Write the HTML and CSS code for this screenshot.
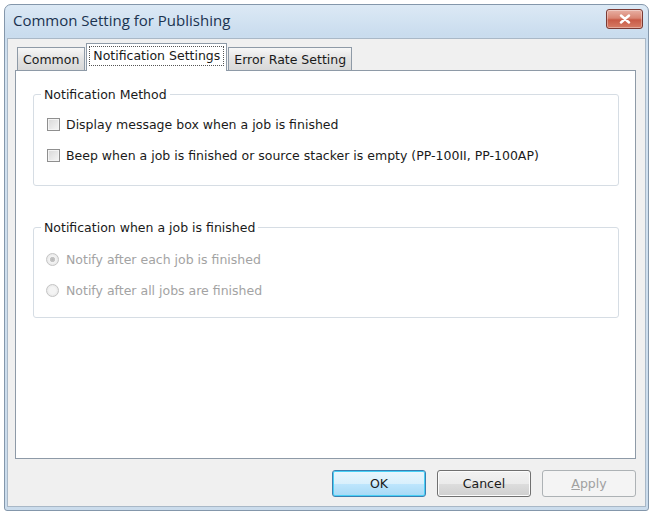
FILE: index.html
```html
<!DOCTYPE html>
<html lang="en">
<head>
    <meta charset="UTF-8">
    <title>Common Setting for Publishing</title>
    <link rel="stylesheet" href="styles.css">
</head>
<body>
    <div class="window">
        <div class="titlebar">
            <span class="title">Common Setting for Publishing</span>
            <button class="close-btn" aria-label="Close">
                <svg width="12" height="10" viewBox="0 0 12 10">
                    <path d="M2 1.5 L10 8.5 M10 1.5 L2 8.5" stroke="#fff" stroke-width="2.4" stroke-linecap="round"/>
                </svg>
            </button>
        </div>
        <div class="client">
            <div class="tabs">
                <div class="tab">Common</div>
                <div class="tab active"><span class="focus">Notification Settings</span></div>
                <div class="tab">Error Rate Setting</div>
            </div>
            <div class="panel">
                <fieldset class="group first">
                    <legend>Notification Method</legend>
                    <div class="rows">
                        <label class="row"><span class="checkbox"></span>Display message box when a job is finished</label>
                        <label class="row"><span class="checkbox"></span>Beep when a job is finished or source stacker is empty (PP-100II, PP-100AP)</label>
                    </div>
                </fieldset>
                <fieldset class="group second">
                    <legend>Notification when a job is finished</legend>
                    <div class="rows">
                        <label class="row disabled"><span class="radio checked"></span>Notify after each job is finished</label>
                        <label class="row disabled"><span class="radio"></span>Notify after all jobs are finished</label>
                    </div>
                </fieldset>
            </div>
            <div class="buttons">
                <button class="btn default">OK</button>
                <button class="btn">Cancel</button>
                <button class="btn disabled"><u>A</u>pply</button>
            </div>
        </div>
    </div>
</body>
</html>
```

FILE: styles.css
```css
body {
    margin: 0;
    background: #ffffff;
    font-family: "DejaVu Sans", Verdana, sans-serif;
    font-size: 12.5px;
    color: #1a1a1a;
}

.window {
    margin: 4px 0 0 4px;
    width: 645px;
    height: 507px;
    box-sizing: border-box;
    border: 1px solid #8497ab;
    border-radius: 7px 7px 3px 3px;
    background: linear-gradient(#dce9f5 0px, #c9dcee 30px, #d3e2f0 60px, #cbdcec 100%);
    padding: 0 2px 3px 2px;
    display: flex;
    flex-direction: column;
}

/* title bar */
.titlebar {
    height: 33px;
    display: flex;
    align-items: flex-start;
    justify-content: space-between;
}

.title {
    margin: 5px 0 0 6px;
    font-family: "Open Sans", "Liberation Sans", sans-serif;
    font-size: 15px;
    color: #1b3350;
}

.close-btn {
    margin: 4px 3px 0 0;
    width: 37px;
    height: 20px;
    border: 1px solid #7a3a34;
    border-radius: 3px;
    background: linear-gradient(#e8b0a4 0%, #d98573 45%, #c85a46 55%, #d77d66 100%);
    box-shadow: inset 0 0 0 1px rgba(255,255,255,0.35);
    display: flex;
    align-items: center;
    justify-content: center;
    padding: 0;
}

/* client area */
.client {
    flex: 1;
    background: #f0f0f0;
    border: 1px solid #a9b8c7;
    padding: 5px 9px 0 7px;
    display: flex;
    flex-direction: column;
}

.tabs {
    display: flex;
    align-items: flex-end;
    height: 26px;
    padding-left: 2px;
    position: relative;
    z-index: 1;
}

.tab {
    height: 23px;
    box-sizing: border-box;
    padding: 4px 5px 0 5px;
    border: 1px solid #8e9aa7;
    border-bottom: none;
    background: linear-gradient(#f7f7f7, #e3e3e3 50%, #d8d8d8);
    margin-right: -1px;
    color: #1a1a1a;
}

.tab.active {
    height: 28px;
    margin: 0 1px 0 2px;
    padding: 2px 2px 0 2px;
    background: #ffffff;
    margin-bottom: -1px;
}

.tab.active .focus {
    display: inline-block;
    padding: 1px 3px 2px 3px;
    border: 1px dotted #555;
}

.panel {
    height: 389px;
    box-sizing: border-box;
    background: #ffffff;
    border: 1px solid #8e9aa7;
    padding: 0 16px 0 17px;
}

/* group boxes */
.group {
    margin: 0;
    padding: 0;
    border: 1px solid #d6dde4;
    border-radius: 3px;
}

.group legend {
    margin-left: 7px;
    padding: 0 3px;
    line-height: 15px;
}

.group.first {
    margin-top: 16px;
}

.group.second {
    margin-top: 34px;
}

.rows {
    display: flex;
    flex-direction: column;
    gap: 16px;
    padding: 15px 0 22px 13px;
}

.group.second .rows {
    padding: 17px 0 19px 13px;
}

.row {
    display: flex;
    align-items: center;
    height: 15px;
    gap: 6px;
}

.row.disabled {
    color: #a3a3a3;
}

.checkbox {
    width: 11px;
    height: 11px;
    border: 1px solid #8f8f8f;
    background: linear-gradient(135deg, #d8d8d8, #f6f6f6);
    box-shadow: inset 0 0 0 1px #f4f4f4;
}

.radio {
    width: 11px;
    height: 11px;
    border: 1px solid #c4c4c4;
    border-radius: 50%;
    background: radial-gradient(circle, #f4f4f4 40%, #e0e0e0);
    margin-left: -1px;
    margin-right: 1px;
}

.radio.checked {
    background: radial-gradient(circle, #b9b9b9 0, #c6c6c6 30%, #f4f4f4 38%, #e0e0e0);
}

/* dialog buttons */
.buttons {
    display: flex;
    justify-content: flex-end;
    gap: 11px;
    margin-top: 11px;
}

.btn {
    width: 94px;
    height: 27px;
    border: 1px solid #707070;
    border-radius: 3px;
    background: linear-gradient(#f2f2f2 0%, #ebebeb 50%, #dddddd 51%, #cfcfcf 100%);
    box-shadow: inset 0 0 0 1px #fcfcfc;
    font-family: "DejaVu Sans", Verdana, sans-serif;
    font-size: 12.5px;
    color: #1a1a1a;
    padding: 0;
}

.btn.default {
    border-color: #3c7fb1;
    background: linear-gradient(#eaf6fd 0%, #d9f0fc 50%, #bee6fd 51%, #a7d9f5 100%);
    box-shadow: inset 0 0 0 1px #48d0f6;
}

.btn.disabled {
    border-color: #adb2b5;
    background: #f4f4f4;
    box-shadow: none;
    color: #a0a0a0;
}
```
